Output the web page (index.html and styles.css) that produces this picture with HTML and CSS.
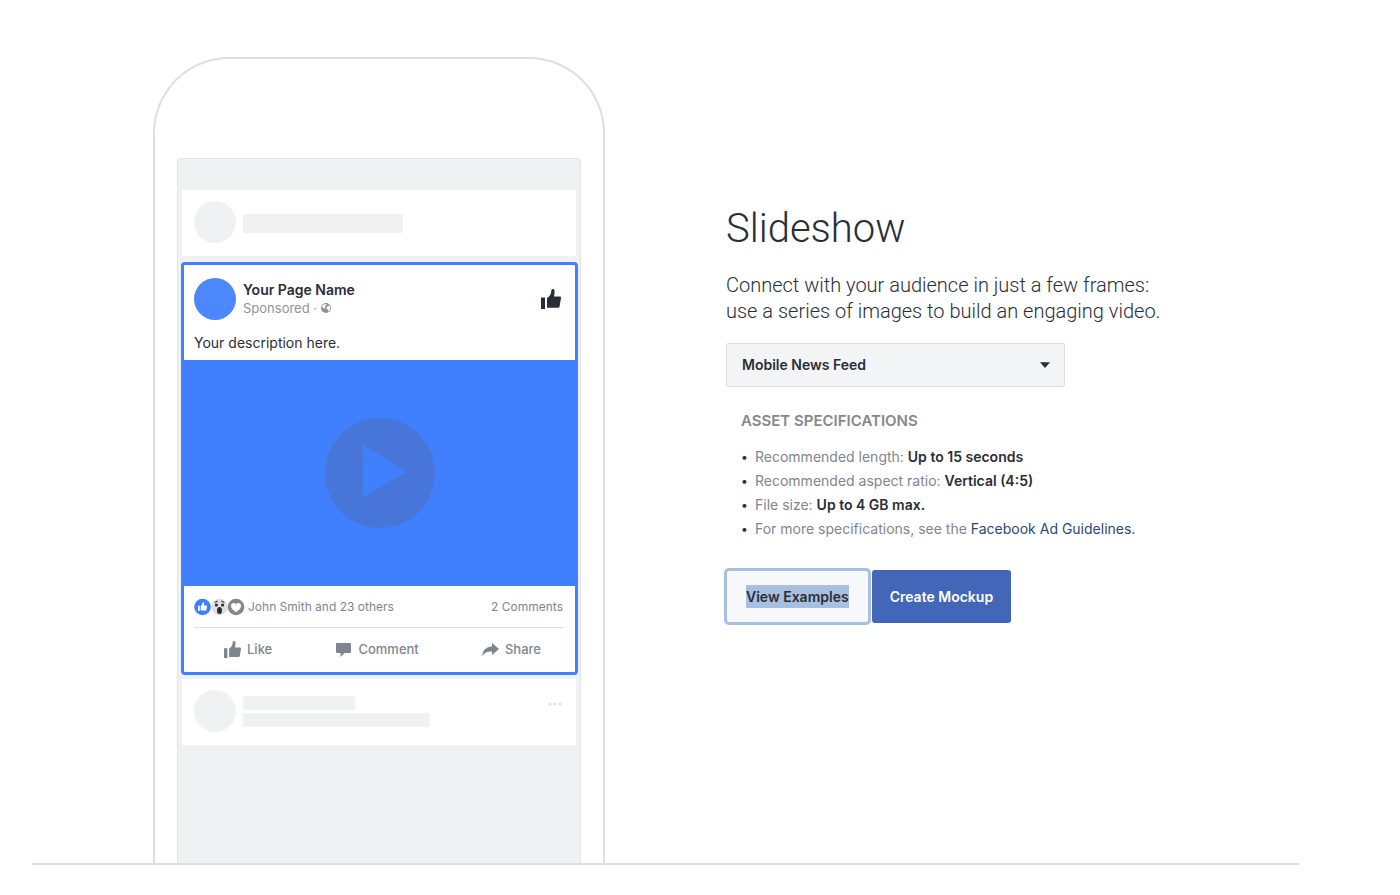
FILE: index.html
```html
<!DOCTYPE html>
<html lang="en">
<head>
<meta charset="utf-8">
<title>Slideshow</title>
<link rel="stylesheet" href="styles.css">
</head>
<body>
<svg class="sprite" width="0" height="0" aria-hidden="true">
  <symbol id="thumb" viewBox="0 0 20 20">
    <path d="M0 8.500h4V20H0z"/>
    <path d="M6 9c2.600-1.600 4-4 4.200-6.600C10.300 1 10.600 0 11.700 0c1.500 0 2.100 1.400 1.900 3.200L13 7.500h6q1.200 0 1 1.500l-1.400 8.500q-.2 1.300-1.700 1.300H6z"/>
  </symbol>
</svg>
<main class="stage">
  <section class="phone" aria-label="Ad preview">
    <div class="screen">
      <div class="card stub">
        <span class="avatar"></span>
        <span class="bar bar-name"></span>
      </div>
      <article class="ad">
        <header class="ad-head">
          <span class="avatar avatar-brand"></span>
          <div class="ad-title">
            <strong class="page-name">Your Page Name</strong>
            <span class="sponsored">Sponsored ·
              <svg class="globe" viewBox="0 0 10 10" aria-hidden="true"><circle cx="5" cy="5" r="5"/><path d="M1.500 2.300 4 .9l1.600.6-.8 1.300-1.300.7.9.9-.6 1.300-1.400-.8L1 4zM6.500 3.200l2-.6.8 1.900-.7 2.700-1.400 1.300-.3-2.100-1.400-1z"/></svg>
            </span>
          </div>
          <svg class="head-thumb" aria-hidden="true"><use href="#thumb"/></svg>
        </header>
        <p class="description">Your description here.</p>
        <div class="media">
          <svg class="play" viewBox="0 0 110 110" role="img" aria-label="Play"><circle cx="55" cy="55" r="55"/><path d="M38 27v52l44-25z"/></svg>
        </div>
        <div class="ad-foot">
          <div class="stats">
            <svg class="reactions" viewBox="0 0 51 18" aria-hidden="true">
              <circle class="r-like" cx="8.500" cy="9" r="8.300"/>
              <use class="r-thumb" href="#thumb" x="4" y="4" width="9" height="9"/>
              <circle class="r-wow" cx="25.500" cy="9" r="8.300"/>
              <g class="r-face"><circle cx="22.400" cy="7" r="1.600"/><circle cx="28.600" cy="7" r="1.600"/><ellipse cx="25.500" cy="12.500" rx="2.500" ry="3.600"/><path d="M20.500 4l3-1.500.4 1-3 1.400zM30.500 4l-3-1.500-.4 1 3 1.400z"/></g>
              <circle class="r-love" cx="42" cy="9" r="8.300"/>
              <path class="r-heart" d="M42 14.300C38.800 11.800 37 10 37 7.700 37 5 40.500 4 42 6.400 43.500 4 47 5 47 7.700c0 2.300-1.800 4.100-5 6.600z"/>
            </svg>
            <span>John Smith and 23 others</span>
            <span class="comments">2 Comments</span>
          </div>
          <div class="actions">
            <button class="action" type="button"><svg class="action-icon" aria-hidden="true"><use href="#thumb"/></svg>Like</button>
            <button class="action" type="button"><svg class="action-icon" viewBox="0 0 17 17" aria-hidden="true"><path d="M2 2h13q1 0 1 1v8q0 1-1 1H9.500L5.500 16v-4H2q-1 0-1-1V3q0-1 1-1z"/></svg>Comment</button>
            <button class="action" type="button"><svg class="action-icon" viewBox="0 0 17 17" aria-hidden="true"><path d="M10 2l7 6-7 6v-3.500C5.500 10.300 2.500 11.500.3 15 .6 9 4 5.800 10 5.400z"/></svg>Share</button>
          </div>
        </div>
      </article>
      <div class="card stub">
        <span class="avatar"></span>
        <span class="bars"><span class="bar bar-short"></span><span class="bar bar-long"></span></span>
        <svg class="more" viewBox="0 0 14 4" aria-hidden="true"><circle cx="2" cy="2" r="1.500"/><circle cx="7" cy="2" r="1.500"/><circle cx="12" cy="2" r="1.500"/></svg>
      </div>
    </div>
  </section>
  <section class="info">
    <h1 class="title">Slideshow</h1>
    <p class="lead">Connect with your audience in just a few frames:<br>use a series of images to build an engaging video.</p>
    <div class="picker">
      <select class="placement" aria-label="Placement"><option>Mobile News Feed</option></select>
      <svg class="caret" viewBox="0 0 10 6" aria-hidden="true"><path d="M0 .3h10L5 6z"/></svg>
    </div>
    <div class="specs">
      <h2 class="specs-title">ASSET SPECIFICATIONS</h2>
      <ul class="spec-list">
        <li><span>Recommended length: <b>Up to 15 seconds</b></span></li>
        <li><span>Recommended aspect ratio: <b>Vertical (4:5)</b></span></li>
        <li><span>File size: <b>Up to 4 GB max.</b></span></li>
        <li><span>For more specifications, see the <a href="#guidelines">Facebook Ad Guidelines.</a></span></li>
      </ul>
    </div>
    <div class="buttons">
      <button class="btn btn-view" type="button"><mark>View Examples</mark></button>
      <button class="btn btn-create" type="button">Create Mockup</button>
    </div>
  </section>
</main>
</body>
</html>
```
FILE: styles.css
```css
* { box-sizing: border-box; }
body {
  margin: 0;
  padding: 57px 101px 30px 32px;
  background: #fff;
  color: #292e36;
  font: 14px/20px Inter, "Liberation Sans", sans-serif;
}
h1, h2, p, ul { margin: 0; padding: 0; }
.sprite { position: absolute; }
svg { flex: none; fill: currentColor; }
button { font: inherit; cursor: pointer; }

.stage {
  display: grid;
  grid-template-columns: minmax(0, 452px) minmax(0, 1fr);
  column-gap: 121px;
  padding-left: 121px;
  border-bottom: 2px solid #dddfe2;
}

.phone {
  padding: 99px 22px 0;
  border: 2px solid #dddfe2;
  border-bottom: 0;
  border-radius: 76px 76px 0 0;
}
.screen {
  padding: 31px 4px 118px;
  background: #eff1f3;
  border: 1px solid #e2e4e8;
  border-bottom: 0;
  border-radius: 4px 4px 0 0;
}
.card { background: #fff; }
.stub {
  display: flex;
  align-items: center;
  gap: 7px;
  height: 66px;
  padding: 0 14px 2px 12px;
}
.avatar {
  flex: none;
  width: 42px;
  height: 42px;
  border-radius: 50%;
  background: #eff1f3;
}
.bar {
  height: 14px;
  border-radius: 2px;
  background: #eff1f3;
}
.bar-name { width: 160px; height: 19px; margin-top: 2px; }
.bars { display: grid; gap: 3px; }
.bar-short { width: 112px; }
.bar-long { width: 187px; }
.more { width: 14px; height: 4px; margin: 0 0 14px auto; color: #dddfe2; }

.ad {
  margin: 6px -2px 4px -1px;
  border: 3px solid #4080ff;
  border-radius: 4px;
  background: #fff;
}
.ad-head {
  display: flex;
  align-items: center;
  gap: 7px;
  padding: 13px 14px 0 10px;
}
.avatar-brand { background: #4c87fb; }
.ad-title { display: grid; line-height: 18px; }
.page-name { font-size: 14px; font-weight: 600; }
.sponsored { color: #8d949e; font-size: 13px; }
.globe { width: 10px; height: 10px; fill: #8d949e; }
.globe path { fill: #fff; }
.head-thumb { width: 20px; height: 20px; margin-left: auto; }
.description { padding: 13px 10px 7px; }
.media {
  display: grid;
  place-items: center;
  height: 226px;
  background: #4080ff;
}
.play { width: 110px; height: 110px; fill: #4776d8; }
.play path { fill: #4080ff; }
.ad-foot { padding: 0 12px 0 10px; color: #7f858f; }
.stats {
  display: flex;
  align-items: center;
  gap: 3px;
  height: 42px;
  border-bottom: 1px solid #dddfe2;
  font-size: 12px;
}
.reactions { width: 51px; height: 18px; }
.r-like { fill: #4080ff; }
.r-thumb, .r-heart { fill: #fff; }
.r-wow { fill: #dfe0e2; }
.r-face { fill: #292e36; }
.r-love { fill: #85878b; }
.comments { margin-left: auto; }
.actions {
  display: flex;
  justify-content: space-between;
  padding: 0 22px 2px 30px;
}
.action {
  display: flex;
  align-items: center;
  gap: 6px;
  height: 42px;
  padding: 0;
  border: 0;
  background: none;
  color: #7f858f;
  font-size: 13px;
  font-weight: 500;
}
.action-icon { width: 17px; height: 17px; }

.info { padding-top: 148px; }
.title, .lead { font-family: Roboto, "Liberation Sans", sans-serif; font-weight: 300; }
.title { font-size: 40px; line-height: 48px; }
.lead { margin-top: 19px; font-size: 20px; line-height: 26px; }
.picker {
  display: grid;
  align-items: center;
  max-width: 339px;
  margin-top: 19px;
}
.placement, .caret { grid-area: 1 / 1; }
.placement {
  width: 100%;
  height: 44px;
  padding: 0 15px;
  appearance: none;
  border: 1px solid #dddfe2;
  border-radius: 2px;
  background: #f3f4f6;
  color: inherit;
  font: inherit;
  font-weight: 600;
}
.caret { width: 10px; height: 6px; margin-right: 15px; justify-self: end; pointer-events: none; }
.specs { padding: 24px 0 0 15px; }
.specs-title { color: #85888d; font-size: 15px; font-weight: 600; line-height: 20px; }
.spec-list { margin-top: 14px; list-style: none; color: #7f858f; line-height: 24px; }
.spec-list li { display: flex; }
.spec-list li::before { content: "•"; flex: none; width: 14px; color: #292e36; font-size: 12px; }
.spec-list b { color: #292e36; font-weight: 600; }
.spec-list a { color: #29487d; text-decoration: none; }
.buttons { display: flex; gap: 3px; margin-top: 29px; }
.btn {
  height: 53px;
  padding: 0 18px;
  border: 0;
  border-radius: 3px;
  font-weight: 600;
}
.btn-view { padding: 0 20px; background: #f7f8f9; color: #292e36; outline: 3px solid #a9bfe0; outline-offset: -1px; }
.btn-view mark { padding: 3px 0; background: #a9bfe0; color: inherit; }
.btn-create { background: #4267b8; color: #fff; }
```
